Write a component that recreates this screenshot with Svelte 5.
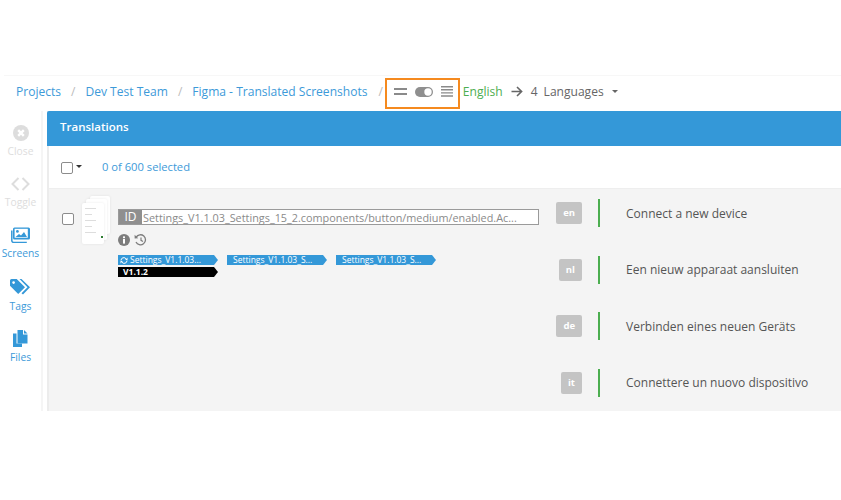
<script>
  const crumbs = ['Projects', 'Dev Test Team', 'Figma - Translated Screenshots'];
  const translations = [
    { code: 'en', text: 'Connect a new device' },
    { code: 'nl', text: 'Een nieuw apparaat aansluiten' },
    { code: 'de', text: 'Verbinden eines neuen Geräts' },
    { code: 'it', text: 'Connettere un nuovo dispositivo' }
  ];
</script>

<div class="page">
  <nav class="crumbs">
    {#each crumbs as c}
      <a href="#top">{c}</a><span class="sep">/</span>
    {/each}
    <div class="density">
      <svg width="13" height="7" viewBox="0 0 13 7"><path d="M0 1h13M0 6h13" stroke="#8a8a8a" stroke-width="2" /></svg>
      <svg width="18" height="10" viewBox="0 0 18 10"><rect x="0" y="0" width="18" height="10" rx="5" fill="#8f8f8f" /><circle cx="13" cy="5" r="3.7" fill="#fff" /></svg>
      <svg width="12" height="11" viewBox="0 0 12 11"><path d="M0 0.7h12M0 3.8h12M0 6.9h12M0 10h12" stroke="#8a8a8a" stroke-width="1.4" /></svg>
    </div>
    <span class="source">English</span>
    <svg class="arrow" width="12" height="11" viewBox="0 0 12 11"><path d="M0.5 5.5h10M6 1l4.6 4.5L6 10" fill="none" stroke="#666" stroke-width="1.6" /></svg>
    <span class="langs">4</span>
    <span class="langs name">Languages</span>
    <span class="caret"></span>
  </nav>

  <div class="body">
    <aside class="side">
      <div class="tool off">
        <svg width="16" height="16" viewBox="0 0 16 16"><circle cx="8" cy="8" r="8" fill="#ddd" /><path d="M5.2 5.2l5.6 5.6M10.8 5.2l-5.6 5.6" stroke="#fff" stroke-width="2.4" /></svg>
        <span>Close</span>
      </div>
      <div class="tool off">
        <svg width="19" height="16" viewBox="0 0 19 16"><path d="M7.5 2L1.5 8l6 6M11.5 2l6 6-6 6" fill="none" stroke="#ddd" stroke-width="2" /></svg>
        <span>Toggle</span>
      </div>
      <div class="tool">
        <svg width="19" height="16" viewBox="0 0 19 16"><path d="M3 1.5h14a1.5 1.5 0 0 1 1.5 1.5v9a1.5 1.5 0 0 1-1.5 1.5H3A1.5 1.5 0 0 1 1.5 12V3A1.5 1.5 0 0 1 3 1.5z" transform="translate(0.5 -1)" fill="#3498d8" /><path d="M0.8 3.5v10a2 2 0 0 0 2 2h13" fill="none" stroke="#3498d8" stroke-width="1.5" /><rect x="3.6" y="1.8" width="13.2" height="8.9" fill="#fff" /><circle cx="6.4" cy="4.4" r="1.4" fill="#3498d8" /><path d="M4.5 10l3.5-3 2 1.6L13 5l3 5z" fill="#3498d8" /></svg>
        <span>Screens</span>
      </div>
      <div class="tool">
        <svg width="21" height="17" viewBox="0 0 21 17"><path d="M0 1.5A1.5 1.5 0 0 1 1.5 0h5.2L15 8.2 8.2 15 0 6.8z" fill="#3498d8" /><path d="M9.5 0h2L20 8.2 13 15.5l-1.5-1.3L17.5 8.2z" fill="#3498d8" /><circle cx="3.6" cy="3.6" r="1.3" fill="#fff" /></svg>
        <span>Tags</span>
      </div>
      <div class="tool">
        <svg width="15" height="17" viewBox="0 0 15 17"><path d="M0 3.5h3.5V13.5H9V17H0z" fill="#3498d8" /><path d="M4.5 0H10v4.5h4.5V13.5H4.5z" fill="#3498d8" /><path d="M11 0l3.5 3.5H11z" fill="#3498d8" /></svg>
        <span>Files</span>
      </div>
    </aside>

    <main class="panel">
      <header class="title">Translations</header>
      <div class="select-row">
        <span class="check"></span>
        <span class="mini-caret"></span>
        <a class="count" href="#top">0 of 600 selected</a>
      </div>
      <section class="content">
        <div class="asset">
          <span class="check row-check"></span>
          <div class="thumb">
            <span class="sheet s3"></span>
            <span class="sheet s2"></span>
            <span class="sheet s1">
              <i></i><i class="short"></i><i></i><i class="short"></i><i></i>
              <b></b>
            </span>
          </div>
          <div class="meta">
            <div class="id-box">
              <span class="id">ID</span>
              <span class="key">Settings_V1.1.03_Settings_15_2.components/button/medium/enabled.Ac...</span>
            </div>
            <div class="actions">
              <svg width="12" height="12" viewBox="0 0 12 12"><circle cx="6" cy="6" r="6" fill="#7d7d7d" /><rect x="5" y="5" width="2" height="4.6" fill="#fff" /><rect x="5" y="2.4" width="2" height="1.8" fill="#fff" /></svg>
              <svg width="13" height="12" viewBox="0 0 13 12"><path d="M2.2 3.2A5 5 0 1 1 2 8" fill="none" stroke="#7d7d7d" stroke-width="1.3" /><path d="M0.6 0.8l3.6 3.4L0.6 4.6z" fill="#7d7d7d" /><path d="M7 3.4V6.3l2 1.2" fill="none" stroke="#7d7d7d" stroke-width="1.2" /></svg>
            </div>
            <div class="tags">
              <span class="tag">
                <svg width="8" height="7" viewBox="0 0 8 7"><path d="M1 3.5A2.8 2.8 0 0 1 6.2 2M7 3.5A2.8 2.8 0 0 1 1.8 5" fill="none" stroke="#fff" stroke-width="1" /><path d="M7.5 0.5v2.4H5.1zM0.5 6.5V4.1h2.4z" fill="#fff" /></svg>
                Settings_V1.1.03...
              </span>
              <span class="tag">Settings_V1.1.03_S...</span>
              <span class="tag">Settings_V1.1.03_S...</span>
            </div>
            <span class="tag version">V1.1.2</span>
          </div>
        </div>
        <div class="strings">
          {#each translations as t}
            <div class="string">
              <div class="code-cell"><span class="code">{t.code}</span></div>
              <span class="bar"></span>
              <span class="text">{t.text}</span>
            </div>
          {/each}
        </div>
      </section>
    </main>
  </div>
</div>

<style>
  :global(body) {
    margin: 0;
    background: #fff;
    overflow: hidden;
  }
  .page {
    width: 841px;
    height: 500px;
    padding-top: 75px;
    box-sizing: border-box;
    font-family: "Open Sans", "Liberation Sans", sans-serif;
    overflow: hidden;
  }
  a {
    color: #3d9ad9;
    text-decoration: none;
  }
  .crumbs {
    height: 36px;
    box-sizing: border-box;
    margin-left: 4px;
    padding-left: 12px;
    padding-bottom: 4px;
    border-top: 1px solid #f7f7f7;
    display: flex;
    align-items: center;
    font-size: 12.05px;
    white-space: nowrap;
  }
  .sep {
    color: #bbb;
    margin: 0 10px;
  }
  .crumbs .sep:nth-of-type(3) {
    margin-right: 0;
    margin-left: 11px;
  }
  .density {
    box-sizing: border-box;
    width: 75px;
    height: 31px;
    margin-left: 2px;
    margin-right: 3px;
    margin-top: 3px;
    border: 2.5px solid #f58a1f;
    display: flex;
    align-items: center;
    gap: 8px;
    padding: 0 0 3px 7px;
  }
  .source {
    color: #4cae50;
  }
  .arrow {
    margin: 0 8px 0 8px;
  }
  .langs {
    color: #666;
  }
  .name {
    margin-left: 6px;
  }
  .caret {
    margin-left: 8px;
    border: 3px solid transparent;
    border-top: 3px solid #666;
    border-bottom: 0;
  }
  .body {
    display: flex;
    height: 300px;
  }
  .side {
    width: 41px;
    flex: none;
    border-right: 2px solid #f5f5f5;
    padding-top: 14px;
    box-sizing: content-box;
  }
  .tool {
    height: 51.2px;
    display: flex;
    flex-direction: column;
    align-items: center;
    gap: 3px;
    color: #3d9ad9;
    font-size: 10.3px;
    line-height: 14px;
  }
  .tool.off {
    color: #ddd;
  }
  .panel {
    flex: 1;
    margin-left: 4px;
    min-width: 0;
    border-left: 2px solid #ececec;
  }
  .title {
    height: 35px;
    margin-left: -2px;
    padding-left: 13px;
    background: #3498d8;
    color: #fff;
    font-size: 11.5px;
    font-weight: 600;
    line-height: 32px;
    border-radius: 2px 0 0 0;
  }
  .select-row {
    height: 43px;
    box-sizing: border-box;
    display: flex;
    align-items: center;
    padding-left: 12px;
    padding-bottom: 2px;
    border-bottom: 1px solid #eee;
  }
  .check {
    box-sizing: border-box;
    width: 12px;
    height: 12px;
    background: #fff;
    border: 1.3px solid #8c8c8c;
    border-radius: 2px;
    flex: none;
  }
  .select-row .check {
    margin-top: 3px;
  }
  .mini-caret {
    margin-left: 3px;
    margin-top: 1px;
    border: 3px solid transparent;
    border-top: 3px solid #333;
    border-bottom: 0;
  }
  .count {
    margin-left: 20px;
    font-size: 11.2px;
  }
  .content {
    height: 222px;
    background: #f4f4f4;
    display: flex;
    position: relative;
  }
  .asset {
    width: 503px;
    flex: none;
    display: flex;
    align-items: flex-start;
  }
  .row-check {
    margin: 24px 0 0 13px;
  }
  .thumb {
    position: relative;
    width: 28px;
    height: 50px;
    margin: 7px 0 0 8px;
    flex: none;
  }
  .sheet {
    position: absolute;
    background: #fff;
    border-radius: 2px;
    box-shadow: 0 0 3px rgba(0, 0, 0, 0.08);
  }
  .s3 {
    left: 8px;
    top: 0;
    width: 20px;
    height: 38px;
  }
  .s2 {
    left: 4px;
    top: 3px;
    width: 21px;
    height: 41px;
  }
  .s1 {
    left: 0;
    top: 7px;
    width: 22px;
    height: 41px;
    box-sizing: border-box;
    padding: 5px 3px;
    display: flex;
    flex-direction: column;
    gap: 5px;
  }
  .s1 i {
    display: block;
    height: 1px;
    width: 11px;
    background: #ddd;
  }
  .s1 i.short {
    width: 7px;
  }
  .s1 b {
    position: absolute;
    right: 1px;
    bottom: 6px;
    width: 2.5px;
    height: 2.5px;
    background: #2e7d32;
  }
  .meta {
    margin: 20px 0 0 8px;
    min-width: 0;
  }
  .id-box {
    box-sizing: border-box;
    width: 421px;
    height: 16px;
    display: flex;
    align-items: center;
    border: 1px solid #9a9a9a;
    background: #fff;
  }
  .id {
    background: #8f8f8f;
    color: #fff;
    font-size: 12px;
    width: 23px;
    height: 100%;
    text-align: center;
    line-height: 14px;
    flex: none;
  }
  .key {
    margin-left: 1px;
    color: #8a8a8a;
    font-size: 10.85px;
    white-space: nowrap;
  }
  .actions {
    display: flex;
    align-items: center;
    gap: 4px;
    margin-top: 8px;
    height: 13px;
  }
  .tags {
    display: flex;
    gap: 9px;
    margin-top: 9px;
  }
  .tag {
    box-sizing: border-box;
    height: 10px;
    width: 100px;
    padding-left: 6px;
    padding-right: 6px;
    background: #3498d8;
    color: #fff;
    font-size: 8.5px;
    font-weight: 500;
    line-height: 10px;
    white-space: nowrap;
    display: flex;
    align-items: center;
    gap: 2px;
    clip-path: polygon(0 0, calc(100% - 4px) 0, 100% 50%, calc(100% - 4px) 100%, 0 100%);
  }
  .tags .tag:first-child {
    padding-left: 2px;
  }
  .version {
    margin-top: 2px;
    background: #000;
    padding-left: 5px;
    font-weight: 700;
  }
  .strings {
    flex: 1;
    margin-top: -3.7px;
  }
  .string {
    height: 56.35px;
    display: flex;
    align-items: center;
  }
  .code-cell {
    width: 30px;
    display: flex;
    justify-content: flex-end;
    flex: none;
  }
  .code {
    background: #c4c4c4;
    color: #fff;
    font-size: 9.5px;
    font-weight: 700;
    padding: 0 7px;
    height: 22px;
    line-height: 22px;
    border-radius: 2px;
  }
  .bar {
    width: 2px;
    height: 28px;
    margin-left: 16px;
    background: #4cae50;
    flex: none;
  }
  .text {
    margin-left: 26px;
    font-size: 12px;
    color: #555;
    white-space: nowrap;
  }
</style>
